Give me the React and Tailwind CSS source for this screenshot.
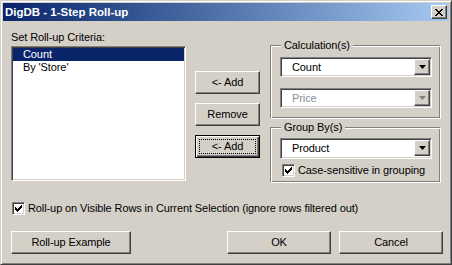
import React from 'react';

const raised =
  'border border-t-white border-l-white border-r-[#404040] border-b-[#404040] shadow-[inset_-1px_-1px_0_#808080] bg-[#d4d0c8]';
const sunken =
  'border border-t-[#808080] border-l-[#808080] border-r-white border-b-white shadow-[inset_1px_1px_0_#404040,inset_-1px_-1px_0_#d4d0c8]';
const etched =
  'border border-t-[#808080] border-l-[#808080] border-r-white border-b-white shadow-[inset_1px_1px_0_#fff,inset_-1px_-1px_0_#808080]';

const Arrow = ({ color = '#000' }) => (
  <svg width="7" height="4" viewBox="0 0 7 4">
    <polygon points="0,0 7,0 3.5,4" fill={color} />
  </svg>
);

const Check = () => (
  <svg width="7" height="7" viewBox="0 0 7 7" shapeRendering="crispEdges">
    <path d="M0 2h1v1h1v1h1v-1h1v-1h1v-1h1v-1h1v3h-1v1h-1v1h-1v1h-1v1h-1v-1h-1v-1h-1z" fill="#000" />
  </svg>
);

const CheckBox = () => (
  <div className={`w-[13px] h-[13px] bg-white flex items-center justify-center shrink-0 ${sunken}`}>
    <Check />
  </div>
);

const Button = ({ children, className = '' }) => (
  <div className={`h-[23px] flex items-center justify-center ${raised} ${className}`}>
    {children}
  </div>
);

const Combo = ({ value, disabled, className = '' }) => (
  <div className={`h-[20px] flex bg-white p-[1px] ${sunken} ${className}`}>
    <div
      className={`flex-1 pl-[10px] leading-[16px] ${disabled ? 'text-[#8a8f9c]' : 'text-black'}`}
    >
      {value}
    </div>
    <div className={`w-[16px] h-[16px] flex items-center justify-center ${raised}`}>
      <Arrow color={disabled ? '#808080' : '#000'} />
    </div>
  </div>
);

const Group = ({ title, className = '', children }) => (
  <div className={`relative ${etched} ${className}`}>
    <span className="absolute -top-[7px] left-[10px] px-[3px] bg-[#d4d0c8] leading-[13px]">
      {title}
    </span>
    {children}
  </div>
);

export default function App() {
  return (
    <div
      className="w-[452px] h-[265px] bg-[#d4d0c8] p-[2px] border border-t-[#d4d0c8] border-l-[#d4d0c8] border-r-[#404040] border-b-[#404040] shadow-[inset_1px_1px_0_#fff,inset_-1px_-1px_0_#808080] text-[11px] tracking-[-0.1px] text-black"
      style={{ fontFamily: '"Liberation Sans", Arial, sans-serif' }}
    >
      {/* Title bar */}
      <div className="h-[18px] flex items-center justify-between pl-[2px] pr-[2px] bg-linear-to-r from-[#0a246a] to-[#a6caf0]">
        <span className="text-white font-bold text-[11.5px] tracking-normal leading-[18px]">
          DigDB - 1-Step Roll-up
        </span>
        <div className={`w-[16px] h-[14px] flex items-center justify-center ${raised}`}>
          <svg width="8" height="7" viewBox="0 0 8 7" shapeRendering="crispEdges">
            <path
              d="M0 0h2v1h1v1h2v-1h1v-1h2v1h-1v1h-1v1h-1v1h1v1h1v1h1v1h-2v-1h-1v-1h-2v1h-1v1h-2v-1h1v-1h1v-1h1v-1h-1v-1h-1v-1h-1z"
              fill="#000"
            />
          </svg>
        </div>
      </div>

      {/* Body */}
      <div className="flex flex-col pl-[8px] pt-[10px]">
        <div className="flex">
          <div className="w-[175px] flex flex-col">
            <div className="h-[13px] leading-[13px]">Set Roll-up Criteria:</div>
            <div className={`mt-[2px] h-[135px] bg-white p-[1px] ${sunken}`}>
              <div className="h-[13px] leading-[13px] pl-[10px] bg-[#0a246a] text-white">Count</div>
              <div className="h-[13px] leading-[13px] pl-[10px]">By 'Store'</div>
            </div>
          </div>

          <div className="ml-[9px] w-[65px] mt-[40px] flex flex-col gap-[9px]">
            <Button>&lt;- Add</Button>
            <Button>Remove</Button>
            <div className="relative h-[23px] flex items-center justify-center bg-[#d4d0c8] border border-black shadow-[inset_1px_1px_0_#fff,inset_-1px_-1px_0_#404040,inset_-2px_-2px_0_#808080]">
              <span className="absolute inset-[3px] border border-dotted border-black" />
              &lt;- Add
            </div>
          </div>

          <div className="ml-[10px] w-[171px] mt-[14px] flex flex-col gap-[8px]">
            <Group title="Calculation(s)" className="h-[74px] pt-[11px] pl-[9px] pr-[8px]">
              <Combo value="Count" />
              <Combo value="Price" disabled className="mt-[11px]" />
            </Group>
            <Group title="Group By(s)" className="h-[56px] pt-[10px] pl-[9px] pr-[8px]">
              <Combo value="Product" className="h-[21px]" />
              <div className="mt-[5px] flex items-center gap-[3px] pl-[2px]">
                <CheckBox />
                <span className="leading-[13px]">Case-sensitive in grouping</span>
              </div>
            </Group>
          </div>
        </div>

        <div className="mt-[19px] flex items-center gap-[3px] pl-[1px]">
          <CheckBox />
          <span className="leading-[13px]">
            Roll-up on Visible Rows in Current Selection (ignore rows filtered out)
          </span>
        </div>

        <div className="mt-[16px] flex">
          <Button className="w-[120px]">Roll-up Example</Button>
          <Button className="w-[104px] ml-[96px]">OK</Button>
          <Button className="w-[104px] ml-[8px]">Cancel</Button>
        </div>
      </div>
    </div>
  );
}
